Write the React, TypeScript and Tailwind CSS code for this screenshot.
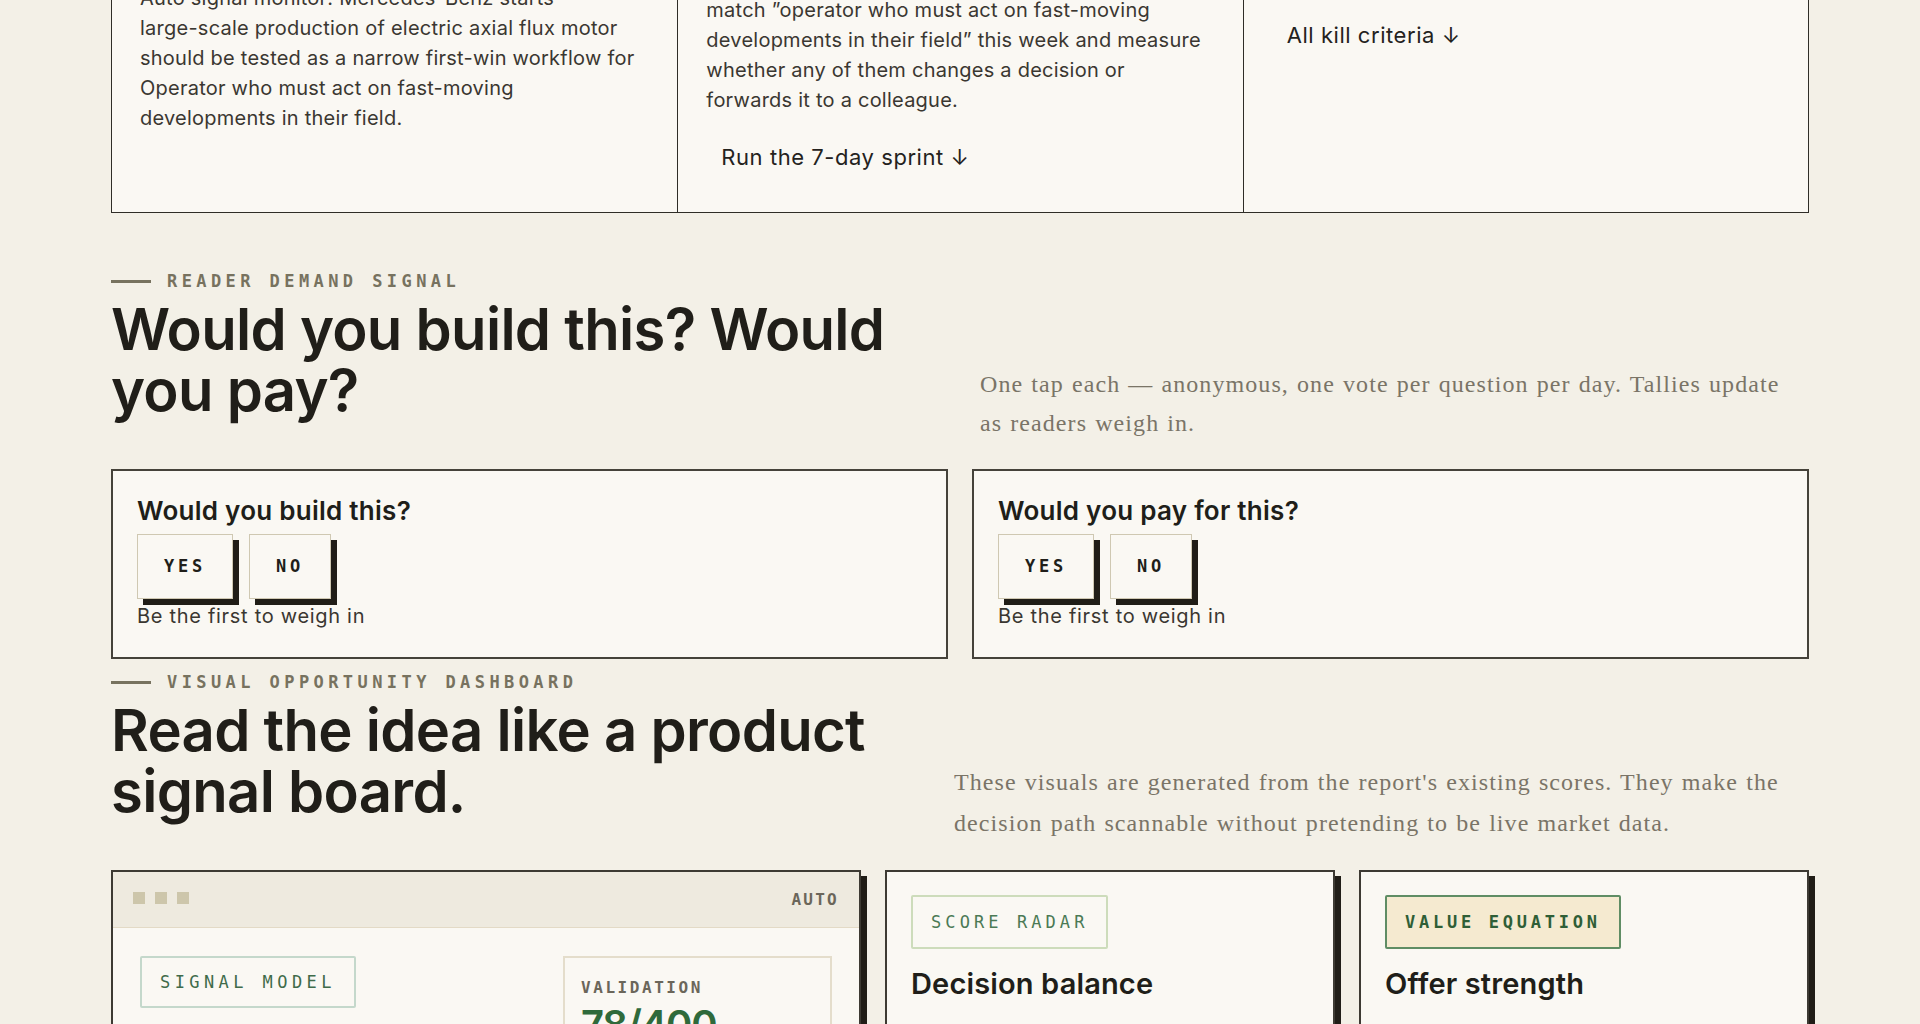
import React from "react";

const sans = "font-['Inter','Noto_Sans',sans-serif]";
const serif = "font-['Liberation_Serif','DejaVu_Serif',serif]";
const mono = "font-['DejaVu_Sans_Mono','Liberation_Mono',monospace]";

function Eyebrow({ text }: { text: string }) {
  return (
    <div className="flex items-center gap-4 h-[24px]">
      <span className="block w-[40px] h-[3px] bg-[#77725f]" />
      <span className={`${mono} text-[17px] leading-[24px] tracking-[0.26em] font-bold text-[#77725f]`}>{text}</span>
    </div>
  );
}

function VoteCard({ title }: { title: string }) {
  const btn = `${mono} border border-[#cfc8b2] bg-[#faf8f3] px-[26px] h-[65px] text-[17px] font-bold tracking-[0.22em] text-[#201e19] shadow-[6px_6px_0_#201d17]`;
  return (
    <div className="border-2 border-[#45423a] bg-[#faf8f3] px-6 pt-6 pb-[28px]">
      <div className={`${sans} text-[26px] leading-[32px] font-semibold text-[#201e19] tracking-[0.01em]`}>{title}</div>
      <div className="mt-[7px] flex gap-4">
        <button className={btn}>YES</button>
        <button className={btn}>NO</button>
      </div>
      <div className={`${sans} mt-1 text-[20px] leading-[26px] tracking-[0.035em] text-[#3a3731]`}>Be the first to weigh in</div>
    </div>
  );
}

export default function App() {
  const body = `${sans} text-[20px] leading-[30px] tracking-[0.012em] text-[#3a3731]`;
  const link = `${sans} inline-block px-[15px] text-[22px] leading-[28px] tracking-[0.025em] text-[#24221d]`;
  const h2 = `${sans} mt-[6px] w-[800px] text-[58px] leading-[61px] font-semibold tracking-[-0.012em] text-[#201e19]`;
  const para = `${serif} text-[24px] tracking-[0.045em] [word-spacing:1px] text-[#7a7467]`;
  return (
    <div className="min-h-screen bg-[#f3f0e7] overflow-hidden">
      <div className="mx-auto w-[1698px] -mt-[60px] pb-20">
        {/* Top summary cards */}
        <div className="grid grid-cols-3 border border-[#2f2d27] bg-[#faf8f3]">
          <div className={`pt-[42px] px-7 ${body}`}>
            Auto signal monitor: Mercedes-Benz starts<br />
            large-scale production of electric axial flux motor<br />
            should be tested as a narrow first-win workflow for<br />
            Operator who must act on fast-moving<br />
            developments in their field.
          </div>
          <div className="border-l border-[#2f2d27] pt-[24px] px-7 pb-[41px]">
            <div className={body}>
              Send five hand-picked signals that<br />
              match ”operator who must act on fast-moving<br />
              developments in their field” this week and measure<br />
              whether any of them changes a decision or<br />
              forwards it to a colleague.
            </div>
            <a className={`mt-[28px] ${link}`}>Run the 7-day sprint ↓</a>
          </div>
          <div className="border-l border-[#2f2d27] pt-[80px] px-7">
            <a className={link}>All kill criteria ↓</a>
          </div>
        </div>

        {/* Reader demand signal */}
        <div className="mt-[56px] flex items-end justify-between">
          <div className="pb-[22px]">
            <Eyebrow text="READER DEMAND SIGNAL" />
            <h2 className={h2}>Would you build this? Would you pay?</h2>
          </div>
          <div className="w-[829px]">
            <p className={`${para} w-[815px] leading-[39px]`}>
              One tap each — anonymous, one vote per question per day. Tallies update as readers weigh in.
            </p>
          </div>
        </div>

        <div className="mt-[26px] grid grid-cols-2 gap-6">
          <VoteCard title="Would you build this?" />
          <VoteCard title="Would you pay for this?" />
        </div>

        {/* Visual opportunity dashboard */}
        <div className="mt-[11px] flex items-end justify-between">
          <div className="pb-[22px]">
            <Eyebrow text="VISUAL OPPORTUNITY DASHBOARD" />
            <h2 className={h2}>Read the idea like a product signal board.</h2>
          </div>
          <div className="w-[855px]">
            <p className={`${para} leading-[41px]`}>
              These visuals are generated from the report's existing scores. They make the decision path scannable without pretending to be live market data.
            </p>
          </div>
        </div>

        <div className="mt-[26px] grid grid-cols-[750fr_450fr_450fr] gap-6">
          <div className="border-2 border-[#3d3a33] bg-[#faf8f3] shadow-[6px_6px_0_#201d17] min-h-[420px]">
            <div className="h-[56px] bg-[#eeeadf] border-b border-[#e3dac6] px-5 flex items-center justify-between">
              <div className="flex gap-[10px] -mt-[3px]">
                <span className="w-3 h-3 bg-[#cdc6ab]" />
                <span className="w-3 h-3 bg-[#cdc6ab]" />
                <span className="w-3 h-3 bg-[#cdc6ab]" />
              </div>
              <span className={`${mono} text-[16px] font-bold tracking-[0.14em] text-[#6b665a]`}>AUTO</span>
            </div>
            <div className="px-[27px] pt-[28px] flex justify-between items-start">
              <span className={`${mono} border-2 border-[#c4d8cb] rounded-[2px] px-[18px] py-[12px] text-[17px] leading-[24px] tracking-[0.26em] text-[#3f6b4a]`}>SIGNAL MODEL</span>
              <div className="w-[269px] border-2 border-[#e4ddcb] px-4 pt-[19px] pb-5">
                <div className={`${mono} text-[16px] leading-[22px] font-bold tracking-[0.16em] text-[#6b665a]`}>VALIDATION</div>
                <div className={`${sans} mt-[4px] text-[40px] leading-[44px] font-semibold tracking-[-0.03em] text-[#2f6a3b]`}>78/400</div>
              </div>
            </div>
          </div>
          <div className="border-2 border-[#3d3a33] bg-[#faf8f3] shadow-[6px_6px_0_#201d17] p-6 pt-[23px] min-h-[420px]">
            <span className={`${mono} inline-block border-2 border-[#cddcbb] rounded-[2px] px-[18px] py-[13px] text-[17px] leading-[24px] tracking-[0.24em] text-[#4b7a55]`}>SCORE RADAR</span>
            <div className={`${sans} mt-[17px] text-[29px] leading-[36px] font-semibold tracking-[0.005em] text-[#201e19]`}>Decision balance</div>
          </div>
          <div className="border-2 border-[#3d3a33] bg-[#faf8f3] shadow-[6px_6px_0_#201d17] p-6 pt-[23px] min-h-[420px]">
            <span className={`${mono} inline-block border-2 border-[#5f8d64] bg-[#f5ead0] rounded-[2px] px-[18px] py-[13px] text-[17px] leading-[24px] font-bold tracking-[0.22em] text-[#2f5e36]`}>VALUE EQUATION</span>
            <div className={`${sans} mt-[17px] text-[29px] leading-[36px] font-semibold tracking-[0.005em] text-[#201e19]`}>Offer strength</div>
          </div>
        </div>
      </div>
    </div>
  );
}
